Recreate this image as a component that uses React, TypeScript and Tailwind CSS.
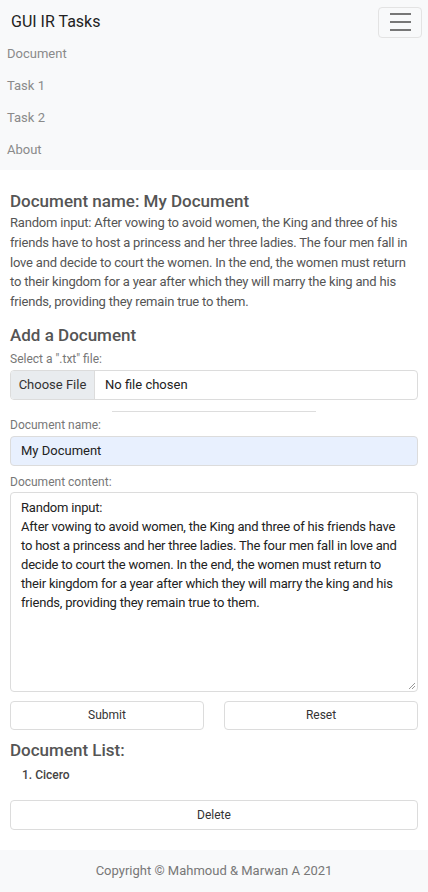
import React from 'react';

const para =
  'Random input: After vowing to avoid women, the King and three of his friends have to host a princess and her three ladies. The four men fall in love and decide to court the women. In the end, the women must return to their kingdom for a year after which they will marry the king and his friends, providing they remain true to them.';

export default function App() {
  return (
    <div className="min-h-[892px] flex flex-col bg-white text-[#555] font-['Roboto',sans-serif]">
      {/* navbar */}
      <nav className="bg-[#f8f9fa] h-[170px] flex flex-col">
        <div className="flex items-center justify-between pl-[11px] pr-[6px] pt-[6px]">
          <span className="text-[16px] text-[#222] leading-[32px]">GUI IR Tasks</span>
          <button className="w-[44px] h-[31px] border border-[#e3e3e3] rounded-[4px] flex flex-col items-center justify-center gap-[6px]">
            <span className="block w-[21px] h-[2px] bg-[#777]" />
            <span className="block w-[21px] h-[2px] bg-[#777]" />
            <span className="block w-[21px] h-[2px] bg-[#777]" />
          </button>
        </div>
        <ul className="flex flex-col pl-[7px] text-[13px] text-[#8a8a8a]">
          <li className="h-[32px] leading-[32px]">Document</li>
          <li className="h-[32px] leading-[32px]">Task 1</li>
          <li className="h-[32px] leading-[32px]">Task 2</li>
          <li className="h-[31px] leading-[31px]">About</li>
        </ul>
      </nav>

      <main className="px-[10px] pt-[20px] flex flex-col">
        <h2 className="text-[17px] font-medium leading-[22px]">Document name: My Document</h2>
        <p className="text-[13px] tracking-[-0.2px] leading-[19.8px] mt-[1px]">{para}</p>

        <h3 className="text-[17px] font-medium leading-[22px] mt-[12px]">Add a Document</h3>
        <label className="text-[12px] leading-[16px] mt-[5px] text-[#777]">Select a ".txt" file:</label>
        <div className="mt-[3px] h-[30px] border border-[#dcdcdc] rounded-[4px] flex text-[13px] overflow-hidden">
          <span className="bg-[#e9ecef] border-r border-[#dcdcdc] w-[84px] flex items-center justify-center text-[#333]">Choose File</span>
          <span className="flex items-center pl-[10px] text-[#222]">No file chosen</span>
        </div>
        <hr className="mx-auto w-[204px] border-[#ddd] mt-[11px]" />

        <label className="text-[12px] leading-[16px] mt-[5px] text-[#777]">Document name:</label>
        <div className="mt-[3px] h-[30px] border border-[#dcdcdc] rounded-[4px] bg-[#e8f0fe] flex items-center pl-[10px] text-[13px] text-[#222]">
          My Document
        </div>

        <label className="text-[12px] leading-[16px] mt-[8px] text-[#777]">Document content:</label>
        <div className="relative mt-[2px] h-[200px] border border-[#dcdcdc] rounded-[4px] px-[10px] py-[5px] text-[13px] tracking-[-0.2px] leading-[19px] text-[#222]">
          <div>Random input:</div>
          <div>
            After vowing to avoid women, the King and three of his friends have to host a princess and her three
            ladies. The four men fall in love and decide to court the women. In the end, the women must return to
            their kingdom for a year after which they will marry the king and his friends, providing they remain
            true to them.
          </div>
          <svg className="absolute right-[2px] bottom-[2px]" width="7" height="7" viewBox="0 0 7 7">
            <path d="M1 7 L7 1 M4 7 L7 4" stroke="#999" strokeWidth="1" />
          </svg>
        </div>

        <div className="grid grid-cols-2 gap-[20px] mt-[9px]">
          <button className="h-[29px] border border-[#dcdcdc] rounded-[4px] text-[12px] text-[#333]">Submit</button>
          <button className="h-[29px] border border-[#dcdcdc] rounded-[4px] text-[12px] text-[#333]">Reset</button>
        </div>

        <h3 className="text-[17px] font-medium leading-[22px] mt-[9px]">Document List:</h3>
        <ol className="pl-[12px] mt-[5px] text-[12px] font-medium leading-[18px] text-[#444]">
          <li>1. Cicero</li>
        </ol>

        <button className="mt-[16px] h-[30px] border border-[#dcdcdc] rounded-[4px] text-[12px] text-[#333]">Delete</button>
      </main>

      <footer className="mt-[20px] bg-[#f8f9fa] h-[42px] flex items-center justify-center text-[13px] text-[#777]">
        Copyright © Mahmoud &amp; Marwan A 2021
      </footer>
    </div>
  );
}
